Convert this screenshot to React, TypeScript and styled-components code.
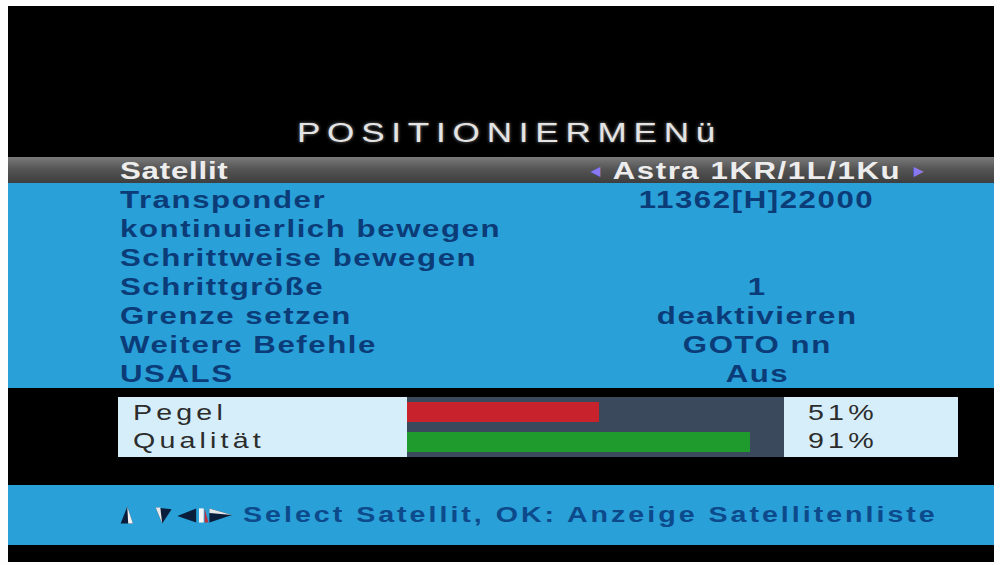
import styled, { createGlobalStyle } from "styled-components";

const GlobalStyle = createGlobalStyle`
  html, body {
    margin: 0;
    padding: 0;
    background: #fdfdfd;
  }
`;

const Screen = styled.div`
  margin: 6px 7px 3px 8px;
  width: 986px;
  height: 556px;
  background: #000;
  display: flex;
  flex-direction: column;
  font-family: "Liberation Sans", Arial, sans-serif;
  overflow: hidden;
`;

// the receiver OSD is drawn horizontally stretched
const Wide = styled.span<{ $origin?: string }>`
  display: inline-block;
  white-space: nowrap;
  transform: scaleX(1.3);
  transform-origin: ${(p) => p.$origin ?? "left"} center;
`;

const TitleArea = styled.div`
  height: 151px;
  display: flex;
  align-items: flex-end;
  justify-content: center;
  padding-left: 18px;
  box-sizing: border-box;
  padding-bottom: 8px;
`;

const Title = styled(Wide)`
  color: #e4e4e4;
  font-size: 27px;
  letter-spacing: 5.2px;
  text-shadow: 0 0 3px #888;
`;

const Row = styled.div<{ $header?: boolean }>`
  display: grid;
  grid-template-columns: 400px 1fr;
  align-items: center;
  height: ${(p) => (p.$header ? 26 : 29)}px;
  padding-left: 112px;
  font-size: 24px;
  font-weight: 700;
  letter-spacing: 1.2px;
  color: ${(p) => (p.$header ? "#ededed" : "#0b3c78")};
  background: ${(p) =>
    p.$header ? "linear-gradient(#7a7a7a, #555 45%, #3e3e3e)" : "transparent"};
`;

const HeaderLabel = styled(Wide)`
  letter-spacing: 0.6px;
`;

const Value = styled.span<{ $gap?: number }>`
  display: flex;
  justify-content: center;
  align-items: center;
  gap: ${(p) => p.$gap ?? 0}px;
  white-space: nowrap;
`;

const Arrow = styled.span`
  color: #8a78f2;
  font-size: 12px;
  letter-spacing: 0;
`;

const List = styled.div`
  height: 205px;
  background: #29a0d8;
  padding-top: 2px;
  box-sizing: border-box;
`;

const SignalBand = styled.div`
  height: 97px;
  padding: 9px 0 0 110px;
  box-sizing: border-box;
`;

const SignalBox = styled.div`
  width: 840px;
  height: 60px;
  display: grid;
  grid-template-columns: 289px 377px 174px;
`;

const SignalText = styled.div<{ $pad: number }>`
  background: #d6eef9;
  color: #2c2c2c;
  font-size: 22px;
  letter-spacing: 3.2px;
  line-height: 28px;
  padding-left: ${(p) => p.$pad}px;
  display: flex;
  flex-direction: column;
  justify-content: center;
`;

const Bars = styled.div`
  background: #3a495b;
  display: flex;
  flex-direction: column;
  justify-content: center;
  gap: 10px;
`;

const Bar = styled.div<{ $color: string }>`
  height: 20px;
  background: ${(p) => p.$color};
`;

const Footer = styled.div`
  height: 60px;
  background: #29a0d8;
  display: flex;
  align-items: center;
  padding-left: 107px;
  gap: 10px;
`;

const Hint = styled(Wide)`
  color: #0d4a8c;
  font-size: 22px;
  font-weight: 700;
  letter-spacing: 2.3px;
`;

const Bottom = styled.div`
  flex: 1;
  background: #000;
`;

function NavKeys() {
  return (
    <svg width="118" height="24" viewBox="0 0 125 24">
      <polygon points="13,3 6,21 19,21" fill="#0a1e3c" />
      <polygon points="13,3 14,21 19,21" fill="#f2f2f2" />
      <polygon points="50,21 43,4 60,6" fill="#0a1e3c" />
      <polygon points="43,4 50,21 48,4" fill="#e8e8e8" />
      <polygon points="66,13 86,5 86,20" fill="#0a1e3c" />
      <polygon points="89,5 89,20 94,20 94,5" fill="#f4f4f4" />
      <polygon points="95,5 95,20 99,20" fill="#c0303a" />
      <polygon points="100,5 124,12 100,20" fill="#0a1e3c" />
      <polygon points="100,5 124,12 100,10" fill="#e6e6e6" />
    </svg>
  );
}

const rows = [
  { label: "Transponder", value: "11362[H]22000" },
  { label: "kontinuierlich bewegen", value: "" },
  { label: "Schrittweise bewegen", value: "" },
  { label: "Schrittgröße", value: "1" },
  { label: "Grenze setzen", value: "deaktivieren" },
  { label: "Weitere Befehle", value: "GOTO nn" },
  { label: "USALS", value: "Aus" },
];

const signal = [
  { label: "Pegel", value: 51, color: "#c8222c" },
  { label: "Qualität", value: 91, color: "#1f9a2c" },
];

export default function App() {
  return (
    <>
      <GlobalStyle />
      <Screen>
        <TitleArea>
          <Title $origin="center">POSITIONIERMENü</Title>
        </TitleArea>
        <Row $header>
          <HeaderLabel>Satellit</HeaderLabel>
          <Value $gap={46}>
            <Arrow>◀</Arrow>
            <Wide $origin="center">Astra 1KR/1L/1Ku</Wide>
            <Arrow>▶</Arrow>
          </Value>
        </Row>
        <List>
          {rows.map((r) => (
            <Row key={r.label}>
              <Wide>{r.label}</Wide>
              <Value>
                <Wide $origin="center">{r.value}</Wide>
              </Value>
            </Row>
          ))}
        </List>
        <SignalBand>
          <SignalBox>
            <SignalText $pad={15}>
              {signal.map((s) => (
                <Wide key={s.label}>{s.label}</Wide>
              ))}
            </SignalText>
            <Bars>
              {signal.map((s) => (
                <Bar key={s.label} $color={s.color} style={{ width: `${s.value}%` }} />
              ))}
            </Bars>
            <SignalText $pad={24}>
              {signal.map((s) => (
                <Wide key={s.label}>{s.value}%</Wide>
              ))}
            </SignalText>
          </SignalBox>
        </SignalBand>
        <Footer>
          <NavKeys />
          <Hint>Select Satellit, OK: Anzeige Satellitenliste</Hint>
        </Footer>
        <Bottom />
      </Screen>
    </>
  );
}
